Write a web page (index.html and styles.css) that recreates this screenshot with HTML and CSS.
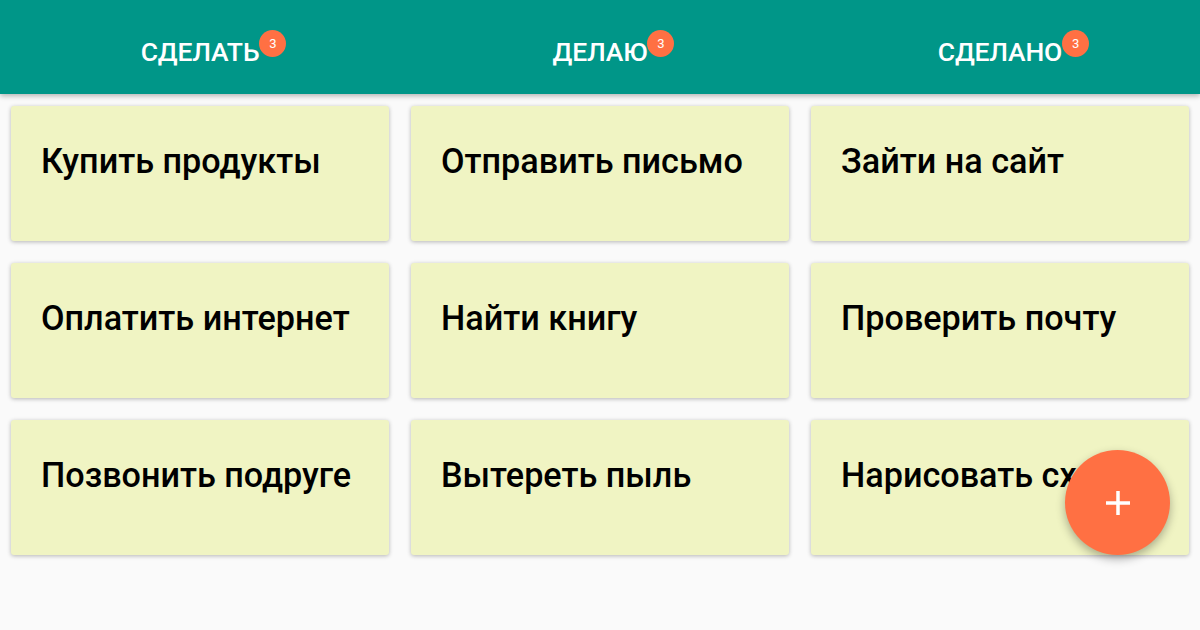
FILE: index.html
```html
<!DOCTYPE html>
<html lang="ru">
<head>
    <meta charset="UTF-8">
    <meta name="viewport" content="width=device-width, initial-scale=1.0">
    <title>Задачи</title>
    <link rel="stylesheet" href="styles.css">
</head>
<body>
    <header class="tabs">
        <div class="tab"><span class="tab-label">СДЕЛАТЬ<span class="badge">3</span></span></div>
        <div class="tab"><span class="tab-label">ДЕЛАЮ<span class="badge">3</span></span></div>
        <div class="tab"><span class="tab-label">СДЕЛАНО<span class="badge">3</span></span></div>
    </header>
    <main class="board">
        <div class="card">Купить продукты</div>
        <div class="card">Отправить письмо</div>
        <div class="card">Зайти на сайт</div>
        <div class="card">Оплатить интернет</div>
        <div class="card">Найти книгу</div>
        <div class="card">Проверить почту</div>
        <div class="card">Позвонить подруге</div>
        <div class="card">Вытереть пыль</div>
        <div class="card">Нарисовать схему</div>
    </main>
    <button class="fab" aria-label="Добавить">
        <svg width="30" height="30" viewBox="0 0 30 30"><path d="M15 3v24M3 15h24" stroke="#FFF" stroke-width="3.5"/></svg>
    </button>
</body>
</html>
```

FILE: styles.css
```css
*{margin:0; padding:0; box-sizing:border-box;}
html,body{height:100%;}
body{background-color:#FAFAFA; font-family:Roboto, "Noto Sans", sans-serif; overflow:hidden;}

.tabs{display:grid; grid-template-columns:repeat(3, 1fr); height:94px; background-color:#009688; box-shadow:0 2px 5px rgba(0,0,0,.28); position:relative; z-index:1;}
.tab{display:flex; align-items:center; justify-content:center; padding-top:8px;}
.tab-label{position:relative; color:#FFF; font-size:26.5px; font-weight:500; letter-spacing:-0.2px;}
.badge{position:absolute; left:100%; top:-6px; width:27px; height:27px; border-radius:50%; background-color:#FF7043; color:#FFF; font-size:13px; font-weight:400; line-height:27px; text-align:center; letter-spacing:0;}

.board{display:grid; grid-template-columns:repeat(3, 1fr); grid-auto-rows:135px; gap:22px; padding:12px 11px;}
.card{background-color:#F0F4C3; border-radius:3px; box-shadow:0 1px 4px rgba(0,0,0,.28); padding:35px 30px; font-size:34.2px; font-weight:500; color:#000; white-space:nowrap; overflow:hidden;}

.fab{position:fixed; left:1065px; top:450px; width:105px; height:105px; border:none; border-radius:50%; background-color:#FF7043; box-shadow:0 4px 10px rgba(0,0,0,.3); display:flex; align-items:center; justify-content:center; z-index:2;}
```
